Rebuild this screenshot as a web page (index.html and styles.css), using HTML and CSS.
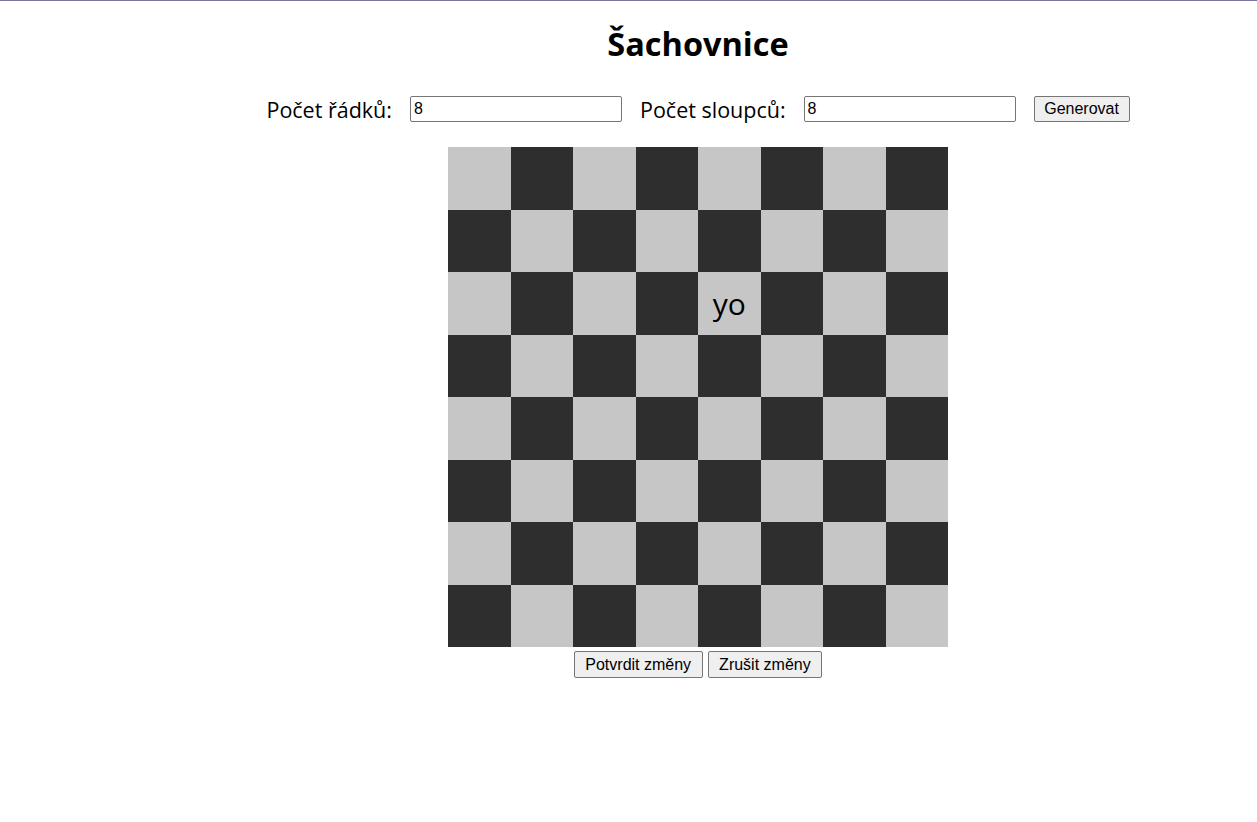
FILE: index.html
```html
<!DOCTYPE html>
<html lang="cs">
<head>
<meta charset="utf-8">
<title>Šachovnice</title>
<link rel="stylesheet" href="styles.css">
</head>
<body>
<main class="page">
  <h1 class="title">Šachovnice</h1>
  <form class="controls" onsubmit="return false">
    <label class="label" for="rows">Počet řádků:</label>
    <input class="field" id="rows" type="text" value="8">
    <label class="label" for="cols">Počet sloupců:</label>
    <input class="field" id="cols" type="text" value="8">
    <button class="btn btn-gen" type="button">Generovat</button>
  </form>
  <div class="board" id="board"></div>
  <div class="actions">
    <button class="btn btn-lg" type="button">Potvrdit změny</button>
    <button class="btn btn-lg" type="button">Zrušit změny</button>
  </div>
</main>
<script>
  var b = document.getElementById('board');
  for (var r = 0; r < 8; r++) {
    for (var c = 0; c < 8; c++) {
      var d = document.createElement('div');
      d.className = 'cell ' + ((r + c) % 2 === 0 ? 'light' : 'dark');
      if (r === 2 && c === 4) d.textContent = 'yo';
      b.appendChild(d);
    }
  }
</script>
</body>
</html>
```
FILE: styles.css
```css
html, body {
  margin: 0;
  padding: 0;
  background: #fff;
}
body {
  border-top: 1px solid #7d74a4;
  font-family: "Open Sans", "DejaVu Sans", sans-serif;
  color: #000;
}
.page {
  padding-left: 139px;
  display: flex;
  flex-direction: column;
  align-items: center;
}
.title {
  margin: 21px 0 0;
  font-size: 32.5px;
  line-height: 44px;
  font-weight: 700;
}
.controls {
  margin-top: 30px;
  display: flex;
  align-items: center;
  gap: 18px;
  height: 26px;
}
.label {
  font-size: 21.5px;
  font-weight: 400;
}
.field {
  box-sizing: border-box;
  width: 212px;
  height: 26px;
  border: 1px solid #767676;
  border-radius: 2px;
  padding: 1px 3px;
  font-family: "Liberation Sans", Arial, sans-serif;
  font-size: 16px;
  margin: 0;
}
.btn {
  box-sizing: border-box;
  font-family: "Liberation Sans", Arial, sans-serif;
  font-size: 16px;
  height: 26px;
  padding: 0 10px;
  background: #efefef;
  border: 1px solid #767676;
  border-radius: 2px;
  color: #000;
  margin: 0;
}
.btn-gen {
  width: 96px;
  padding: 0;
}
.board {
  margin-top: 25px;
  width: 500px;
  height: 500px;
  display: grid;
  grid-template-columns: repeat(8, 1fr);
  grid-template-rows: repeat(8, 1fr);
}
.cell {
  display: flex;
  align-items: center;
  justify-content: center;
  font-size: 30px;
}
.light { background: #c6c6c6; }
.dark { background: #2e2e2e; }
.actions {
  margin-top: 4px;
  display: flex;
  gap: 5px;
}
.btn-lg {
  height: 27px;
  padding: 0 10.5px;
}
```
